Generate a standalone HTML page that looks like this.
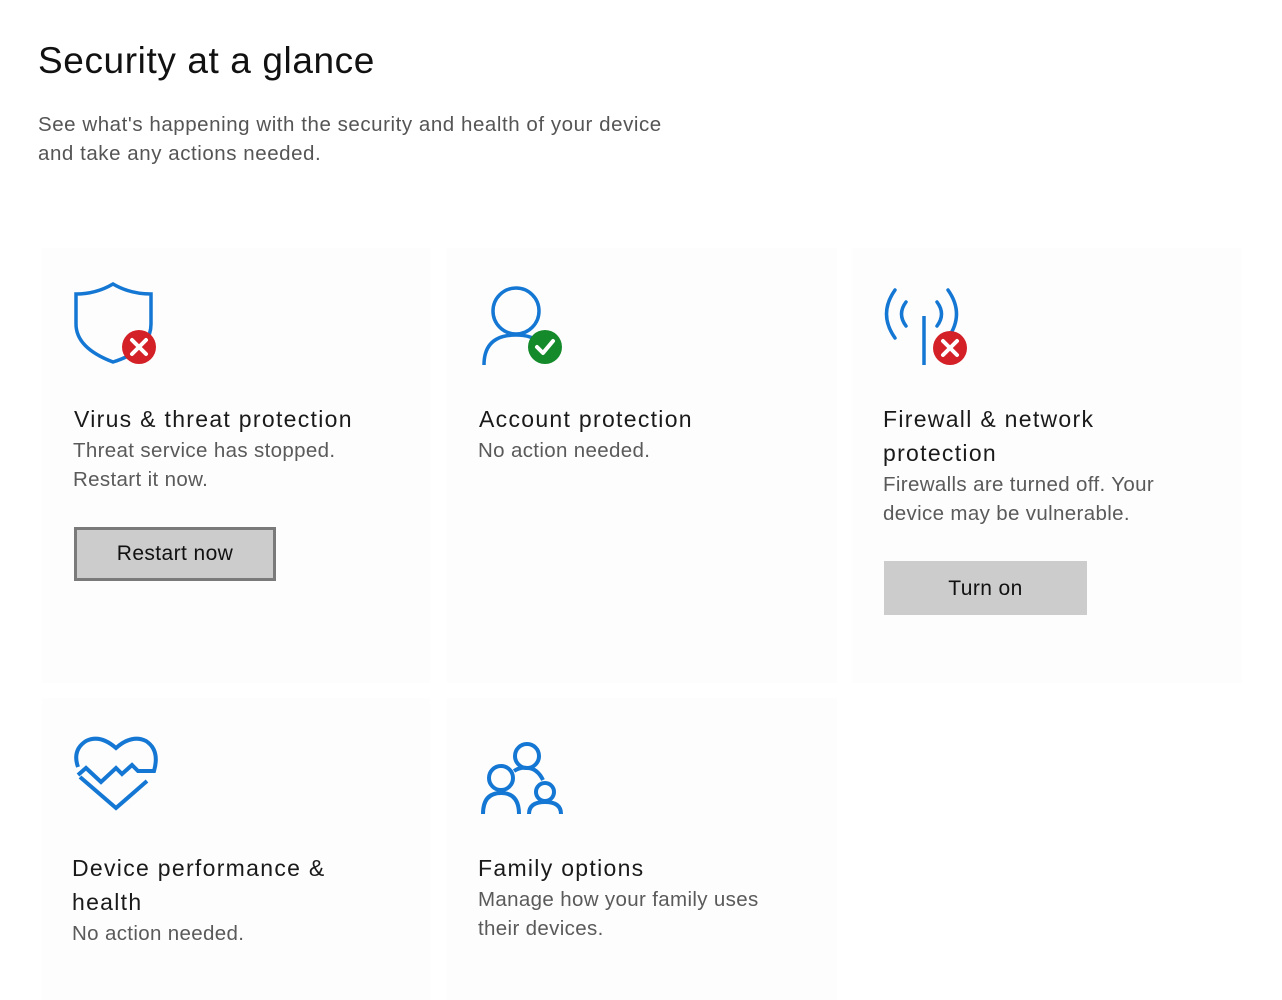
<!DOCTYPE html>
<html><head><meta charset="utf-8"><style>
body{margin:0;width:1282px;height:1000px;background:#fff;font-family:"Liberation Sans",sans-serif;position:relative;overflow:hidden;color:#1a1a1a}
.a{position:absolute;white-space:nowrap}
.card{position:absolute;background:#fdfdfd}
h1{position:absolute;left:38px;top:40px;margin:0;font-weight:normal;font-size:37px;letter-spacing:0.6px;color:#111}
.sub{font-size:20.5px;letter-spacing:0.55px;color:#555;line-height:29px}
.t{font-size:23px;letter-spacing:1.3px;color:#1a1a1a;line-height:34px}
.d{font-size:20.5px;letter-spacing:0.35px;color:#5a5a5a;line-height:29px}
.btn{position:absolute;background:#cccccc;font-size:21px;letter-spacing:0.4px;color:#111;text-align:center;box-sizing:border-box}
</style></head><body>
<div class="card" style="left:42px;top:248px;width:388px;height:435px"></div>
<div class="card" style="left:447px;top:248px;width:390px;height:435px"></div>
<div class="card" style="left:852px;top:248px;width:390px;height:435px"></div>
<div class="card" style="left:42px;top:698px;width:388px;height:302px"></div>
<div class="card" style="left:447px;top:698px;width:390px;height:302px"></div>

<h1>Security at a glance</h1>
<div class="a sub" style="left:38px;top:110px">See what's happening with the security and health of your device<br>and take any actions needed.</div>

<svg class="a" style="left:70px;top:278px" width="95" height="95" viewBox="0 0 95 95">
<path d="M6 16 Q26 16 43 6 Q60 16 81 16 V46 Q81 72 43 84 Q6 70 6 46 Z" fill="none" stroke="#1477d4" stroke-width="3.5"/>
<circle cx="69" cy="69" r="17" fill="#d42027"/>
<path d="M62 62 L76 76 M76 62 L62 76" stroke="#fff" stroke-width="4" stroke-linecap="round"/>
</svg>

<svg class="a" style="left:475px;top:278px" width="95" height="95" viewBox="0 0 95 95">
<circle cx="41" cy="33" r="23" fill="none" stroke="#1477d4" stroke-width="3.5"/>
<path d="M9 87 Q9 57 41 57 Q58 57 66 66" fill="none" stroke="#1477d4" stroke-width="3.5"/>
<circle cx="70" cy="69" r="17" fill="#148a2b"/>
<path d="M62 69 L68 75 L78 63" fill="none" stroke="#fff" stroke-width="4" stroke-linecap="round" stroke-linejoin="round"/>
</svg>

<svg class="a" style="left:880px;top:278px" width="95" height="95" viewBox="0 0 95 95">
<path d="M15 12 Q-2 36 15 60" fill="none" stroke="#1477d4" stroke-width="3.5" stroke-linecap="round"/>
<path d="M26 24 Q17 36 26 48" fill="none" stroke="#1477d4" stroke-width="3.5" stroke-linecap="round"/>
<path d="M57 24 Q66 36 57 48" fill="none" stroke="#1477d4" stroke-width="3.5" stroke-linecap="round"/>
<path d="M68 12 Q85 36 68 60" fill="none" stroke="#1477d4" stroke-width="3.5" stroke-linecap="round"/>
<path d="M44 38 V87" stroke="#1477d4" stroke-width="3.5"/>
<circle cx="70" cy="70" r="17" fill="#d42027"/>
<path d="M63 63 L77 77 M77 63 L63 77" stroke="#fff" stroke-width="4" stroke-linecap="round"/>
</svg>

<svg class="a" style="left:70px;top:730px" width="95" height="85" viewBox="0 0 95 85">
<path d="M8 37 Q2 20 16 11 Q30 4 46 18 Q62 4 76 11 Q90 20 84 41 H68 L62 35 L52 44 L46 38 L31 52 L16 38 L8 45" fill="none" stroke="#1477d4" stroke-width="4"/>
<path d="M10 47 L46 78 L77 51" fill="none" stroke="#1477d4" stroke-width="4"/>
</svg>

<svg class="a" style="left:475px;top:735px" width="95" height="85" viewBox="0 0 95 85">
<circle cx="52" cy="21" r="12" fill="none" stroke="#1477d4" stroke-width="4"/>
<circle cx="26" cy="43" r="12" fill="none" stroke="#1477d4" stroke-width="4"/>
<circle cx="70" cy="57" r="9" fill="none" stroke="#1477d4" stroke-width="4"/>
<path d="M8 79 Q8 58 26 58 Q44 58 44 79" fill="none" stroke="#1477d4" stroke-width="4"/>
<path d="M54 79 Q54 67 70 67 Q86 67 86 79" fill="none" stroke="#1477d4" stroke-width="4"/>
<path d="M39 36 Q45 32 52 33 Q62 33 68 45" fill="none" stroke="#1477d4" stroke-width="4"/>
</svg>

<div class="a t" style="left:74px;top:402px">Virus &amp; threat protection</div>
<div class="a d" style="left:73px;top:436px">Threat service has stopped.<br>Restart it now.</div>
<div class="btn" style="left:74px;top:527px;width:202px;height:54px;border:3px solid #7a7a7a;line-height:48px">Restart now</div>

<div class="a t" style="left:479px;top:402px">Account protection</div>
<div class="a d" style="left:478px;top:436px">No action needed.</div>

<div class="a t" style="left:883px;top:402px">Firewall &amp; network<br>protection</div>
<div class="a d" style="left:883px;top:470px">Firewalls are turned off. Your<br>device may be vulnerable.</div>
<div class="btn" style="left:884px;top:561px;width:203px;height:54px;line-height:56px">Turn on</div>

<div class="a t" style="left:72px;top:851px">Device performance &amp;<br>health</div>
<div class="a d" style="left:72px;top:919px">No action needed.</div>

<div class="a t" style="left:478px;top:851px">Family options</div>
<div class="a d" style="left:478px;top:885px">Manage how your family uses<br>their devices.</div>
</body></html>
